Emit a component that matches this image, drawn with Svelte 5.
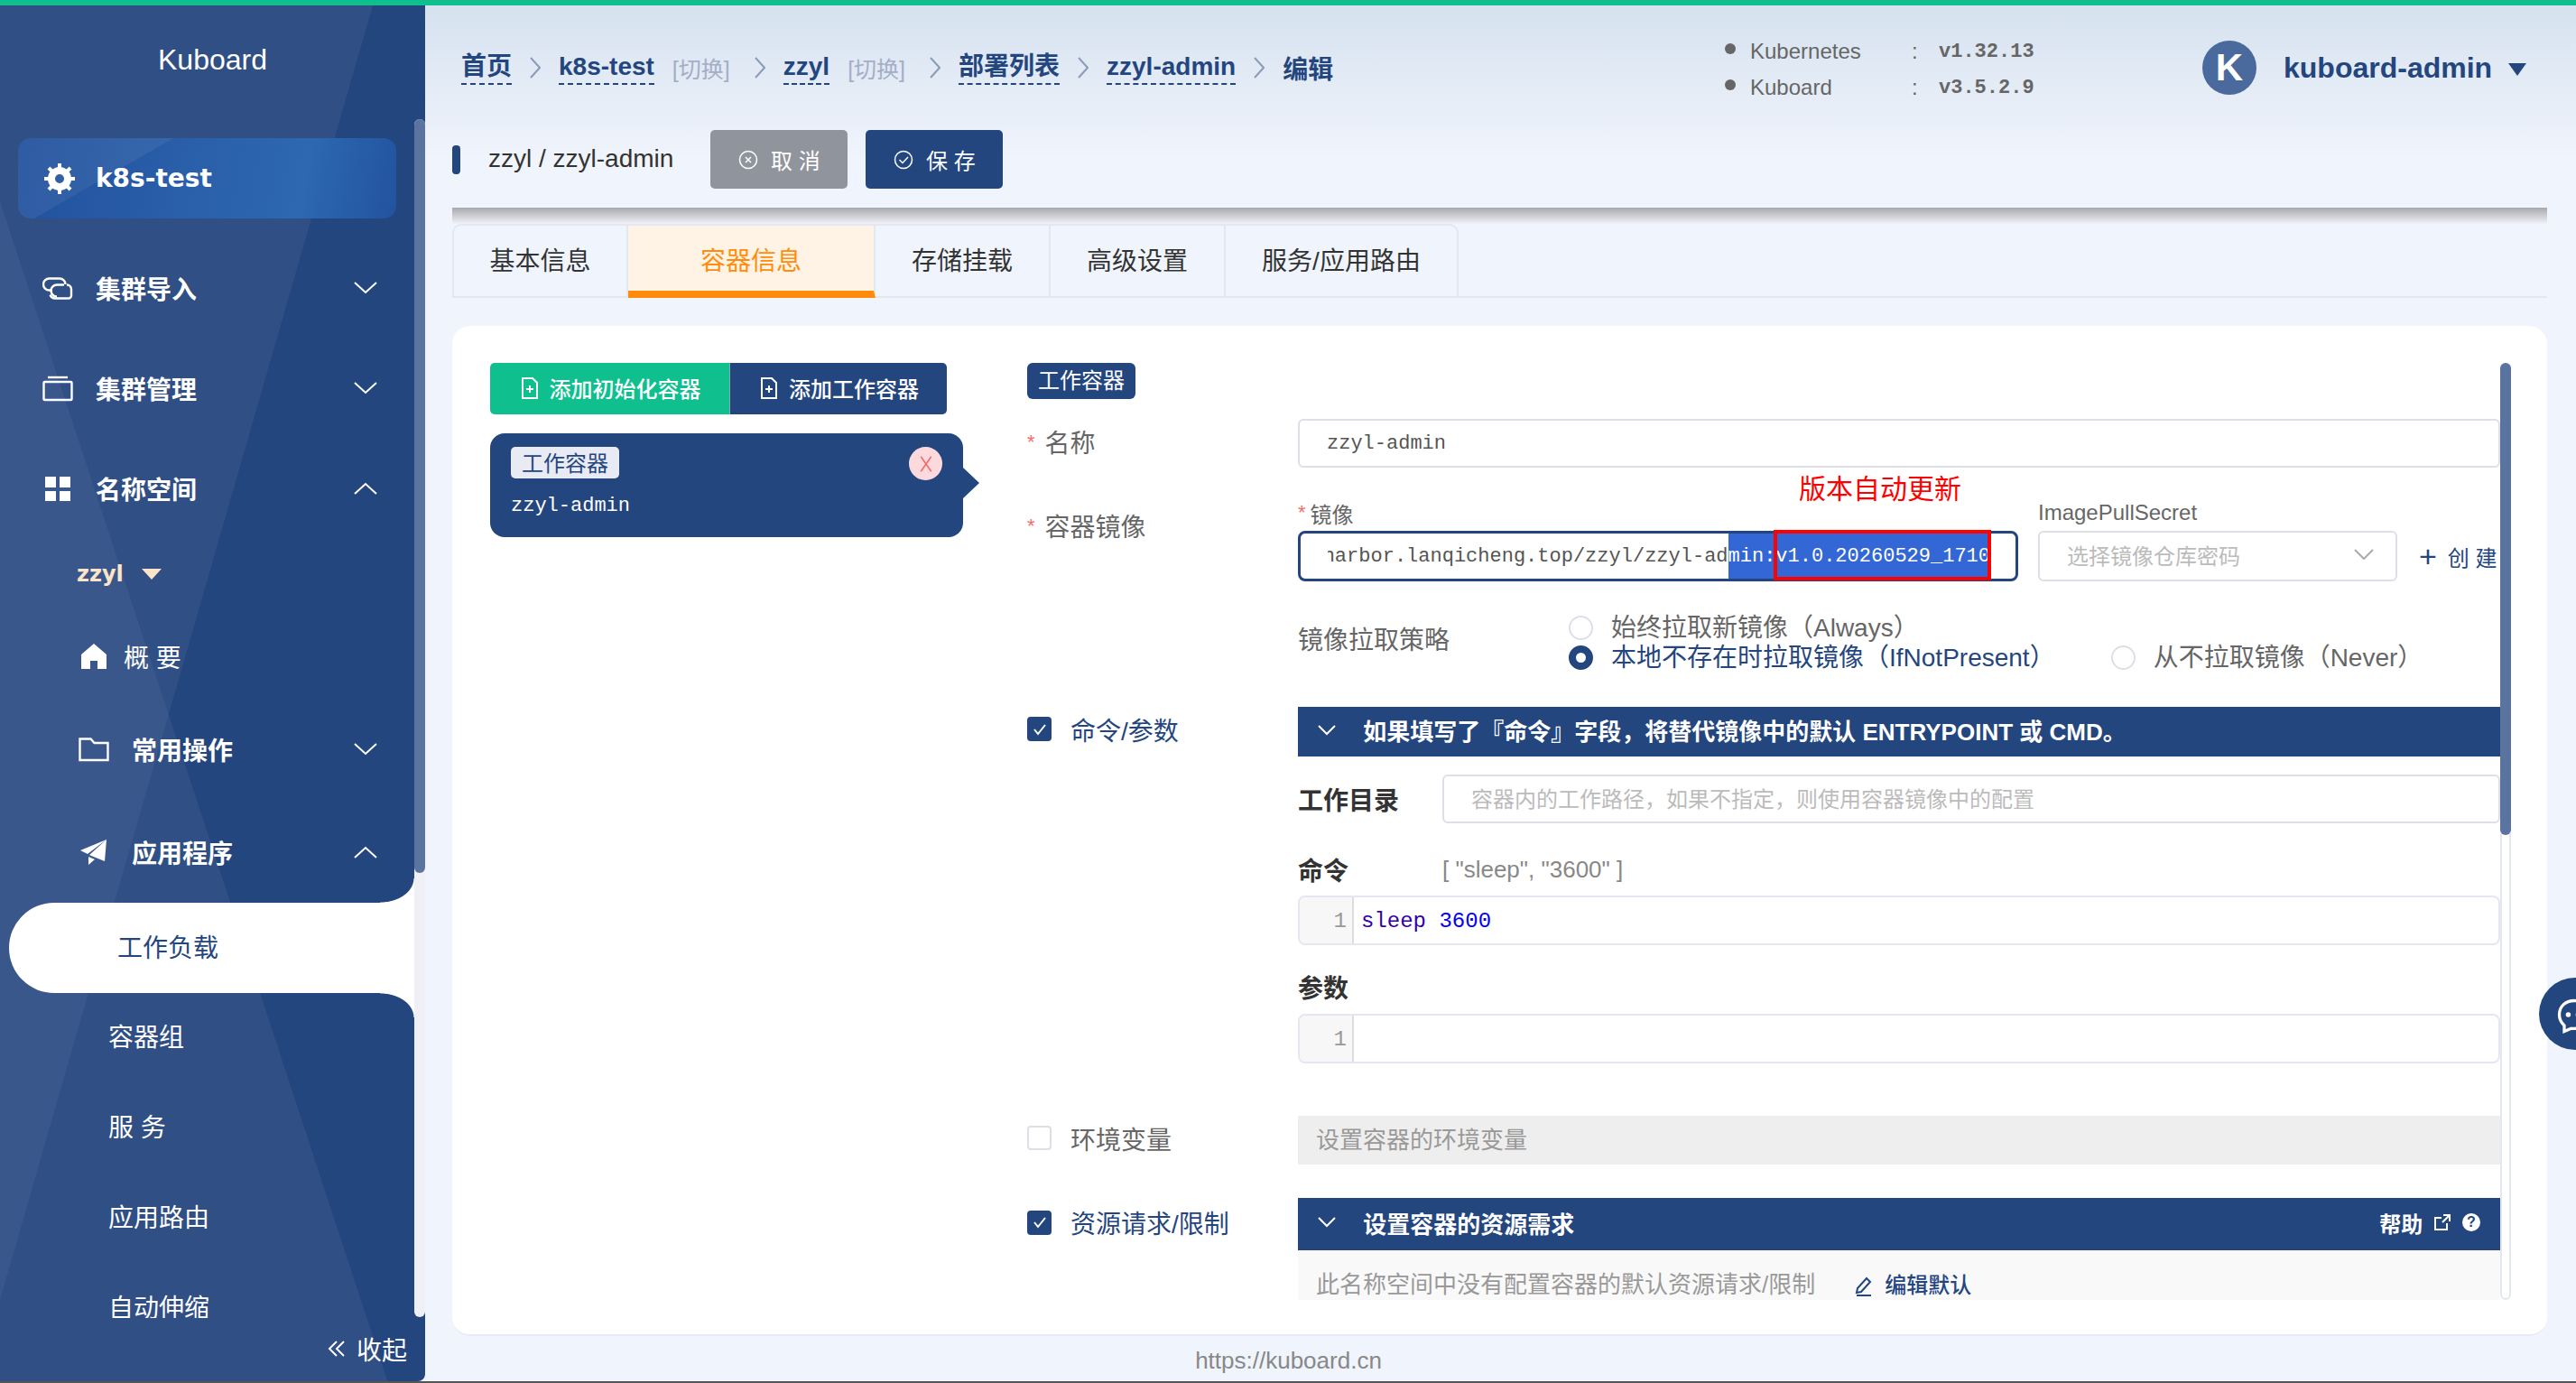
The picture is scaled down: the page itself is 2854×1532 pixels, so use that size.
<script lang="ts">
  const crumbs = [
    { text: '首页' },
    { text: 'k8s-test', swap: true },
    { text: 'zzyl', swap: true },
    { text: '部署列表' },
    { text: 'zzyl-admin' }
  ];
  const tabs = ['基本信息', '容器信息', '存储挂载', '高级设置', '服务/应用路由'];
  const subItems = ['容器组', '服 务', '应用路由', '自动伸缩'];
  const spokes = [0, 45, 90, 135, 180, 225, 270, 315];
</script>

<div class="app">
  <aside class="sidebar">
    <svg class="sidebar-bg" viewBox="0 0 471 1526" aria-hidden="true">
      <polygon points="0,0 413,0 0,1434" fill="#fff" fill-opacity="0.05" />
      <polygon points="0,217 430,1526 0,1526" fill="#fff" fill-opacity="0.05" />
    </svg>
    <div class="logo">Kuboard</div>
    <div class="cluster">
      <svg class="cluster-icon" viewBox="0 0 36 36" aria-hidden="true">
        {#each spokes as a}
          <rect x="16" y="1" width="4" height="8" fill="#fff" transform="rotate({a} 18 18)" />
        {/each}
        <circle cx="18" cy="18" r="9" fill="none" stroke="#fff" stroke-width="8" />
      </svg>
      <span>k8s-test</span>
    </div>

    <nav class="nav">
      <div class="nav-item">
        <svg class="nav-icon" viewBox="0 0 34 34" aria-hidden="true">
          <path d="M11 19.500H7.500a6.500 6.500 0 0 1 0-13H19a6.500 6.500 0 0 1 6.500 6.500" fill="none" stroke="#fff" stroke-width="2.400" />
          <path d="M16 26.500a6.500 6.500 0 0 1 0-13h8" fill="none" stroke="#fff" stroke-width="2.400" />
          <path d="M27 13.500a5 5 0 0 1 5 5v7a3 3 0 0 1-3 3H14a6 6 0 0 1-5.500-4" fill="none" stroke="#fff" stroke-width="2.400" />
        </svg>
        <span class="nav-label">集群导入</span>
        <svg class="chev" viewBox="0 0 26 14" aria-hidden="true"><path d="M1 1l12 11L25 1" /></svg>
      </div>
      <div class="nav-item">
        <svg class="nav-icon" viewBox="0 0 34 34" aria-hidden="true">
          <rect x="1.500" y="10" width="31" height="20" rx="1" fill="none" stroke="#fff" stroke-width="2.400" />
          <path d="M6 5h22" stroke="#fff" stroke-width="2.400" />
        </svg>
        <span class="nav-label">集群管理</span>
        <svg class="chev" viewBox="0 0 26 14" aria-hidden="true"><path d="M1 1l12 11L25 1" /></svg>
      </div>
      <div class="nav-item">
        <svg class="nav-icon" viewBox="0 0 34 34" aria-hidden="true">
          <path d="M3 4h12v12H3zM19 4h12v12H19zM3 20h12v11H3zM19 20h12v11H19z" fill="#fff" />
        </svg>
        <span class="nav-label">名称空间</span>
        <svg class="chev" viewBox="0 0 26 14" aria-hidden="true"><path d="M1 13L13 2l12 11" /></svg>
      </div>
      <div class="ns">
        <span>zzyl</span><i class="ns-caret"></i>
      </div>
      <div class="nav-sub home">
        <svg class="nav-icon" viewBox="0 0 34 34" aria-hidden="true">
          <path d="M17 3L3 15v16h10v-9h8v9h10V15z" fill="#fff" />
        </svg>
        <span>概 要</span>
      </div>
      <div class="nav-sub group first">
        <svg class="nav-icon" viewBox="0 0 34 34" aria-hidden="true">
          <path d="M1.500 5.500h12l4 4.500h15v19h-31z" fill="none" stroke="#fff" stroke-width="2.400" />
        </svg>
        <span class="nav-label">常用操作</span>
        <svg class="chev" viewBox="0 0 26 14" aria-hidden="true"><path d="M1 1l12 11L25 1" /></svg>
      </div>
      <div class="nav-sub group">
        <svg class="nav-icon" viewBox="0 0 34 34" aria-hidden="true">
          <path d="M31 3L2 15l8 4zM31 3L12 20l2 1 15 6zM11 22v9l7-6z" fill="#fff" />
        </svg>
        <span class="nav-label">应用程序</span>
        <svg class="chev" viewBox="0 0 26 14" aria-hidden="true"><path d="M1 13L13 2l12 11" /></svg>
      </div>
      <div class="active-item">工作负载</div>
      {#each subItems as item}
        <div class="sub-link">{item}</div>
      {/each}
    </nav>
    <div class="track"><div class="thumb"></div></div>
    <div class="collapse">
      <svg viewBox="0 0 20 20" aria-hidden="true"><path d="M10 2L2 10l8 8M18 2l-8 8 8 8" /></svg>
      <span>收起</span>
    </div>
  </aside>

  <main class="main">
    <header class="topbar">
      <div class="crumbs">
        {#each crumbs as c}
          <a class="crumb" href="#top">{c.text}</a>
          {#if c.swap}<span class="swap">[切换]</span>{/if}
          <svg class="sep" class:wide={c.swap} viewBox="0 0 12 24" aria-hidden="true"><path d="M1 1l10 11L1 23" /></svg>
        {/each}
        <span class="crumb-last">编辑</span>
      </div>
      <div class="versions">
        <div class="ver"><i></i><span class="ver-name">Kubernetes</span><span class="ver-sep">:</span><b>v1.32.13</b></div>
        <div class="ver"><i></i><span class="ver-name">Kuboard</span><span class="ver-sep">:</span><b>v3.5.2.9</b></div>
      </div>
      <div class="user">
        <span class="avatar">K</span>
        <span class="user-name">kuboard-admin</span>
        <i class="user-caret"></i>
      </div>
    </header>

    <div class="title-row">
      <i class="title-bar"></i>
      <span class="title">zzyl / zzyl-admin</span>
      <button class="btn btn-gray">
        <svg viewBox="0 0 22 22" aria-hidden="true"><circle cx="11" cy="11" r="9.500" /><path d="M8 8l6 6M14 8l-6 6" /></svg>
        取 消
      </button>
      <button class="btn btn-navy">
        <svg viewBox="0 0 22 22" aria-hidden="true"><circle cx="11" cy="11" r="9.500" /><path d="M6.500 11l3.500 3.500 6-6.500" /></svg>
        保 存
      </button>
    </div>
    <div class="shade"></div>

    <div class="tabs">
      {#each tabs as t, i}
        <div class="tab" class:on={i === 1}>{t}</div>
      {/each}
    </div>

    <section class="card">
      <div class="left">
        <div class="add-group">
          <button class="add green">
            <svg viewBox="0 0 20 26" aria-hidden="true"><path d="M2 2h11l5 5v17H2zM6 14h8M10 10v8" /></svg>
            添加初始化容器
          </button>
          <button class="add navy">
            <svg viewBox="0 0 20 26" aria-hidden="true"><path d="M2 2h11l5 5v17H2zM6 14h8M10 10v8" /></svg>
            添加工作容器
          </button>
        </div>
        <div class="container-item">
          <span class="item-badge">工作容器</span>
          <div class="item-name">zzyl-admin</div>
          <span class="remove">
            <svg viewBox="0 0 16 22" aria-hidden="true"><path d="M1 1l14 20M15 1L1 21" /></svg>
          </span>
        </div>
      </div>

      <div class="form">
        <span class="form-badge">工作容器</span>

        <div class="row name-row">
          <div class="lbl"><em>*</em>名称</div>
          <div class="input mono">zzyl-admin</div>
        </div>

        <div class="row image-row">
          <div class="lbl"><em>*</em>容器镜像</div>
          <div class="image-fields">
            <div class="image-col">
              <div class="mini"><em>*</em>镜像</div>
              <div class="image-input">
                <div class="image-text mono"><span class="image-value">harbor.lanqicheng.top/zzyl/zzyl-ad<span class="sel">min:v1.0.20260529_1710</span></span></div>
              </div>
            </div>
            <div class="secret-col">
              <div class="mini">ImagePullSecret</div>
              <div class="secret">
                <span>选择镜像仓库密码</span>
                <svg viewBox="0 0 22 12" aria-hidden="true"><path d="M1 1l10 10L21 1" /></svg>
              </div>
            </div>
            <div class="create"><span class="plus">+</span>创 建</div>
            <div class="note">版本自动更新</div>
            <div class="note-box"></div>
          </div>
        </div>

        <div class="row policy-row">
          <div class="policy">
            <div class="policy-label">镜像拉取策略</div>
            <div class="policy-opts">
              <div class="radio-line"><span class="radio"><i class="dot off"></i>始终拉取新镜像（Always）</span></div>
              <div class="radio-line">
                <span class="radio checked"><i class="dot"></i>本地不存在时拉取镜像（IfNotPresent）</span>
                <span class="radio third"><i class="dot off"></i>从不拉取镜像（Never）</span>
              </div>
            </div>
          </div>
        </div>

        <div class="row section-row cmd">
          <div class="check-label on"><i class="check"><svg viewBox="0 0 18 18" aria-hidden="true"><path d="M3 9l4 5 8-10" /></svg></i>命令/参数</div>
          <div class="section-bar">
            <svg class="bar-chev" viewBox="0 0 20 12" aria-hidden="true"><path d="M1 1l9 9 9-9" /></svg>
            如果填写了『命令』字段，将替代镜像中的默认 ENTRYPOINT 或 CMD。
          </div>
        </div>
        <div class="sub-block">
          <div class="workdir">
            <b>工作目录</b>
            <div class="input placeholder">容器内的工作路径，如果不指定，则使用容器镜像中的配置</div>
          </div>
          <div class="cmd-head"><b>命令</b><span>[ "sleep", "3600" ]</span></div>
          <div class="editor"><span class="gutter">1</span><span class="code mono"><span class="kw">sleep</span> <span class="num">3600</span></span></div>
          <div class="cmd-head args"><b>参数</b></div>
          <div class="editor second"><span class="gutter">1</span><span class="code"></span></div>
        </div>

        <div class="row section-row env">
          <div class="check-label"><i class="check blank"></i>环境变量</div>
          <div class="env-bar">设置容器的环境变量</div>
        </div>

        <div class="row section-row res">
          <div class="check-label on"><i class="check"><svg viewBox="0 0 18 18" aria-hidden="true"><path d="M3 9l4 5 8-10" /></svg></i>资源请求/限制</div>
          <div class="section-bar tall">
            <svg class="bar-chev" viewBox="0 0 20 12" aria-hidden="true"><path d="M1 1l9 9 9-9" /></svg>
            设置容器的资源需求
            <span class="help">
              帮助
              <svg class="ext" viewBox="0 0 20 20" aria-hidden="true"><path d="M15 11v7H2V5h7M11 2h7v7M18 2l-8 8" /></svg>
              <i class="q">?</i>
            </span>
          </div>
        </div>
        <div class="res-body">
          <span>此名称空间中没有配置容器的默认资源请求/限制</span>
          <a class="edit" href="#top">
            <svg viewBox="0 0 20 22" aria-hidden="true"><path d="M13 2l4 4L7 17l-5 1 1-5zM2 21h16" /></svg>
            编辑默认
          </a>
        </div>

        <div class="form-track"><div class="form-thumb"></div></div>
      </div>
    </section>
    <footer class="foot">https://kuboard.cn</footer>
  </main>

  <div class="chat">
    <svg viewBox="0 0 40 40" aria-hidden="true">
      <path d="M20 5C11 5 5 11 5 19c0 5 2 8 5 11v6l7-3c10 1 18-5 18-14S29 5 20 5z" fill="none" stroke="#fff" stroke-width="3" />
      <circle cx="14" cy="19" r="2.500" fill="#fff" /><circle cx="24" cy="19" r="2.500" fill="#fff" />
    </svg>
  </div>
</div>

<style>
  :global(body) {
    margin: 0;
    font-family: "Liberation Sans", "Noto Sans CJK SC", sans-serif;
  }
  .app {
    position: relative;
    display: flex;
    width: 2854px;
    height: 1532px;
    box-sizing: border-box;
    border-top: 6px solid #0fbf8e;
    border-bottom: 2px solid #555;
    overflow: hidden;
    background: #f0f4fc;
    font-size: 28px;
  }
  .mono { font-family: "Liberation Mono", monospace; }

  /* sidebar */
  .sidebar {
    position: relative;
    display: flex;
    flex-direction: column;
    flex: 0 0 471px;
    background: #24467f;
    color: #fff;
    border-radius: 0 0 8px 0;
  }
  .sidebar-bg {
    position: absolute;
    inset: 0;
    width: 471px;
    height: 1526px;
  }
  .logo {
    position: relative;
    height: 147px;
    padding-top: 40px;
    box-sizing: border-box;
    line-height: 40px;
    text-align: center;
    font-size: 32px;
  }
  .cluster {
    position: relative;
    display: flex;
    align-items: center;
    margin-left: 20px;
    width: 419px;
    height: 89px;
    border-radius: 14px;
    background:
      linear-gradient(150deg, rgba(255, 255, 255, 0.06) 0 30%, transparent 30% 100%),
      linear-gradient(100deg, #22519d 0%, #2a5fa9 45%, #2d68b1 75%, #22539f 100%);
    font-size: 28px;
    font-weight: 700;
    font-family: "DejaVu Sans", sans-serif;
  }
  .cluster-icon { width: 36px; height: 36px; margin: 0 22px 0 28px; }
  .nav {
    position: relative;
    flex: 0 0 1218px;
    width: 459px;
    padding-top: 21px;
    box-sizing: border-box;
    overflow: hidden;
  }
  .nav-item, .group {
    display: flex;
    align-items: center;
    height: 111px;
    padding-right: 41px;
    font-weight: 700;
  }
  .nav-item { padding-left: 47px; }
  .nav-icon { width: 34px; height: 34px; flex: none; }
  .nav-label { flex: 1; margin-left: 25px; }
  .chev {
    width: 26px;
    height: 14px;
    fill: none;
    stroke: #fff;
    stroke-width: 2;
  }
  .ns {
    display: flex;
    align-items: center;
    height: 56px;
    margin-top: 12px;
    padding-left: 85px;
    color: #fde3c8;
    font-size: 24px;
    font-weight: 700;
    font-family: "DejaVu Sans", sans-serif;
  }
  .ns-caret {
    margin-left: 20px;
    border: 11px solid transparent;
    border-top: 12px solid #fde3c8;
    border-bottom: 0;
  }
  .nav-sub {
    display: flex;
    align-items: center;
    padding-left: 87px;
  }
  .home { height: 92px; margin-top: 17px; }
  .home span { margin-left: 16px; }
  .group { height: 113px; padding-left: 87px; }
  .group.first { height: 114px; }
  .group .nav-label { margin-left: 25px; }
  .active-item {
    position: relative;
    height: 100px;
    margin-left: 10px;
    padding-left: 120px;
    line-height: 102px;
    background: #fff;
    color: #24467f;
    border-radius: 50px 0 0 50px / 50px 0 0 50px;
  }
  .active-item::before, .active-item::after {
    content: "";
    position: absolute;
    right: 0;
    width: 38px;
    height: 27px;
  }
  .active-item::before {
    top: -27px;
    background: radial-gradient(ellipse 38px 27px at 0 0, transparent 97%, #fff 100%);
  }
  .active-item::after {
    bottom: -27px;
    background: radial-gradient(ellipse 38px 27px at 0 100%, transparent 97%, #fff 100%);
  }
  .sub-link {
    height: 100px;
    padding-left: 120px;
    line-height: 100px;
  }
  .track {
    position: absolute;
    left: 459px;
    top: 126px;
    width: 12px;
    height: 1327px;
    border-radius: 6px;
    background: #eef0f6;
  }
  .thumb {
    height: 835px;
    border-radius: 6px;
    background: #5a749f;
  }
  .collapse {
    position: relative;
    flex: 1;
    display: flex;
    align-items: center;
    justify-content: flex-end;
    gap: 12px;
    padding: 0 20px 2px 0;
    font-size: 28px;
  }
  .collapse svg {
    width: 20px;
    height: 20px;
    fill: none;
    stroke: #fff;
    stroke-width: 2;
  }

  /* main */
  .main {
    flex: 1;
    min-width: 0;
    display: flex;
    flex-direction: column;
    padding: 0 32px 0 30px;
    background: linear-gradient(#d6e2ef, #f0f4fc 170px);
  }
  .topbar {
    position: relative;
    display: flex;
    align-items: center;
    height: 138px;
    flex: none;
  }
  .crumbs {
    display: flex;
    align-items: center;
    margin-left: 10px;
    flex: 1;
    font-weight: 700;
    color: #24467f;
  }
  .crumb {
    color: #24467f;
    text-decoration: none;
    border-bottom: 2px dashed #24467f;
    line-height: 36px;
  }
  .swap {
    margin-left: 20px;
    color: #a3afc6;
    font-size: 25px;
    font-weight: 400;
  }
  .sep {
    width: 12px;
    height: 24px;
    margin: 0 20px;
    fill: none;
    stroke: #8a9cb8;
    stroke-width: 2;
  }
  .sep.wide { margin-left: 27px; }
  .crumb-last { color: #24467f; }
  .versions {
    width: 396px;
    margin-right: 133px;
    color: #666;
    font-size: 24px;
    margin-top: 4px;
  }
  .ver {
    display: flex;
    align-items: center;
    height: 40px;
  }
  .ver i {
    width: 12px;
    height: 12px;
    border-radius: 50%;
    background: #666;
    margin-right: 16px;
    margin-top: -6px;
  }
  .ver-name { width: 179px; }
  .ver-sep { width: 30px; }
  .ver b {
    font-family: "Liberation Mono", monospace;
    font-size: 22px;
  }
  .user {
    display: flex;
    align-items: center;
    width: 350px;
    color: #24467f;
    font-size: 32px;
    font-weight: 700;
    margin-right: 32px;
    white-space: nowrap;
  }
  .avatar {
    flex: none;
    width: 60px;
    height: 60px;
    border-radius: 50%;
    background: #4a6a9e;
    color: #fff;
    font-size: 42px;
    font-weight: 700;
    line-height: 60px;
    text-align: center;
    margin-right: 30px;
  }
  .user-caret {
    margin-left: 18px;
    border: 10px solid transparent;
    border-top: 14px solid #24467f;
    border-bottom: 0;
    margin-top: 4px;
  }
  .title-row {
    display: flex;
    align-items: center;
    height: 65px;
    flex: none;
  }
  .title-bar {
    width: 9px;
    height: 32px;
    border-radius: 4px;
    background: #24467f;
  }
  .title { margin: -2px 41px 0 31px; color: #333; }
  .btn {
    display: inline-flex;
    align-items: center;
    justify-content: center;
    gap: 14px;
    width: 152px;
    height: 65px;
    border: 0;
    border-radius: 5px;
    color: #fff;
    font: inherit;
    font-size: 24px;
    margin-right: 20px;
  }
  .btn svg {
    width: 22px;
    height: 22px;
    fill: none;
    stroke: #fff;
    stroke-width: 1.500;
  }
  .btn-gray { background: #90949c; }
  .btn-navy { background: #24467f; }
  .shade {
    flex: none;
    margin-top: 21px;
    height: 18px;
    background: linear-gradient(#a8a9ad, #f0f2f8);
  }
  .tabs {
    flex: none;
    display: flex;
    height: 82px;
    box-sizing: border-box;
    border-bottom: 2px solid #e4e7ef;
    color: #333;
  }
  .tab {
    box-sizing: border-box;
    height: 82px;
    padding: 0 40px;
    line-height: 80px;
    border: 2px solid #e4e7ef;
    border-left-width: 0;
    border-bottom: 0;
    text-align: center;
  }
  .tab:first-child {
    border-left-width: 2px;
    border-top-left-radius: 10px;
    width: 195px;
    padding: 0;
  }
  .tab:nth-child(3), .tab:nth-child(4) { width: 194px; padding: 0; }
  .tab:last-child { width: 258px; padding: 0; border-top-right-radius: 10px; }
  .tab.on {
    width: 274px;
    padding: 0;
    background: #fff3e6;
    color: #ff8c0a;
    border-bottom: 8px solid #ff8c0a;
  }
  .card {
    flex: none;
    display: flex;
    height: 1119px;
    margin-top: 31px;
    box-sizing: border-box;
    padding: 41px 0 0 42px;
    background: #fff;
    border-radius: 20px;
    border-bottom: 2px solid #e8ebf3;
  }
  .left { width: 524px; flex: none; }
  .add-group { display: flex; width: 506px; }
  .add {
    display: inline-flex;
    align-items: center;
    justify-content: center;
    gap: 12px;
    height: 57px;
    padding: 0 0 2px 2px;
    border: 0;
    color: #fff;
    font: inherit;
    font-size: 24px;
    font-weight: 500;
  }
  .add svg {
    width: 20px;
    height: 26px;
    fill: none;
    stroke: #fff;
    stroke-width: 2;
  }
  .green { width: 265px; background: #0fbf8e; border-radius: 5px 0 0 5px; }
  .navy { width: 241px; background: #24467f; border-radius: 0 5px 5px 0; border-left: 1px solid #8aa; }
  .container-item {
    position: relative;
    height: 115px;
    margin-top: 21px;
    padding: 15px 0 0 23px;
    box-sizing: border-box;
    background: #24467f;
    border-radius: 16px;
    color: #fff;
  }
  .container-item::after {
    content: "";
    position: absolute;
    left: 100%;
    top: 38px;
    border: 17px solid transparent;
    border-left: 18px solid #24467f;
    border-right: 0;
  }
  .item-badge {
    display: inline-block;
    height: 35px;
    padding: 0 12px;
    border-radius: 5px;
    background: #e8ebf3;
    color: #24467f;
    font-size: 24px;
    line-height: 37px;
  }
  .item-name {
    margin-top: 17px;
    font-family: "Liberation Mono", monospace;
    font-size: 22px;
    line-height: 28px;
  }
  .remove {
    position: absolute;
    right: 23px;
    top: 15px;
    display: flex;
    align-items: center;
    justify-content: center;
    width: 37px;
    height: 37px;
    border-radius: 50%;
    background: #fcd9dc;
  }
  .remove svg {
    width: 16px;
    height: 18px;
    fill: none;
    stroke: #f56c6c;
    stroke-width: 2;
  }
  .form {
    position: relative;
    width: 1644px;
    height: 1038px;
    margin-left: 71px;
    flex: none;
    overflow: hidden;
  }
  .form-badge {
    display: block;
    width: 120px;
    height: 40px;
    border-radius: 6px;
    background: #24467f;
    color: #fff;
    font-size: 24px;
    line-height: 40px;
    text-align: center;
  }
  .row {
    display: grid;
    grid-template-columns: 300px 1332px;
  }
  .lbl {
    color: #666;
    font-size: 28px;
    line-height: 52px;
  }
  .lbl em, .mini em {
    color: #f56c6c;
    font-style: normal;
    font-size: 22px;
    margin-right: 11px;
    vertical-align: 4px;
  }
  .mini em { margin-right: 5px; }
  .name-row { margin-top: 22px; }
  .input {
    box-sizing: border-box;
    height: 54px;
    padding-left: 30px;
    border: 2px solid #dcdfe6;
    border-radius: 6px;
    color: #555;
    font-size: 22px;
    line-height: 52px;
  }
  .image-row { margin-top: 34px; }
  .image-row .lbl { margin-top: 5px; }
  .image-fields {
    position: relative;
    display: flex;
  }
  .mini {
    height: 36px;
    margin-top: -2px;
    margin-bottom: 2px;
    color: #666;
    font-size: 24px;
    line-height: 36px;
  }
  .image-col { width: 798px; }
  .image-input {
    box-sizing: border-box;
    height: 56px;
    padding: 0 28px 0 30px;
    border: 3px solid #24467f;
    border-radius: 8px;
    overflow: hidden;
  }
  .image-text {
    display: flex;
    justify-content: flex-end;
    height: 50px;
    overflow: hidden;
    white-space: nowrap;
    color: #555;
    font-size: 22px;
    line-height: 52px;
  }
  .image-value { flex: none; }
  .sel { background: #3367d6; color: #fff; display: inline-block; height: 50px; }
  .secret-col { width: 398px; margin-left: 22px; }
  .secret {
    box-sizing: border-box;
    display: flex;
    align-items: center;
    justify-content: space-between;
    height: 56px;
    padding: 0 24px 4px 30px;
    border: 2px solid #dcdfe6;
    border-radius: 6px;
    color: #bbb;
    font-size: 24px;
  }
  .secret svg {
    width: 22px;
    height: 12px;
    fill: none;
    stroke: #aaa;
    stroke-width: 2;
  }
  .create {
    display: flex;
    align-items: center;
    gap: 12px;
    height: 56px;
    margin: 36px 0 0 24px;
    color: #24467f;
    font-size: 24px;
    white-space: nowrap;
  }
  .plus { font-size: 34px; line-height: 34px; }
  .note {
    position: absolute;
    left: 555px;
    top: -30px;
    color: #f00;
    font-size: 30px;
    line-height: 40px;
  }
  .note-box {
    position: absolute;
    left: 527px;
    top: 35px;
    width: 241px;
    height: 56px;
    box-sizing: border-box;
    border: 4px solid #f00;
  }
  .policy-row { margin-top: 34px; }
  .policy {
    grid-column: 2;
    display: flex;
    color: #666;
    height: 64px;
  }
  .policy-label {
    width: 288px;
    padding-top: 14px;
    line-height: 36px;
  }
  .policy-opts { margin-top: 1px; }
  .radio-line { display: flex; height: 33px; line-height: 33px; white-space: nowrap; }
  .radio { display: inline-flex; align-items: center; margin-left: 12px; }
  .radio.checked { color: #24467f; }
  .dot {
    box-sizing: border-box;
    width: 27px;
    height: 27px;
    border-radius: 50%;
    border: 8px solid #24467f;
    background: #fff;
    margin-right: 20px;
    flex: none;
  }
  .dot.off { border: 2px solid #dcdfe6; }
  .third { margin-left: 62px; }
  .cmd { margin-top: 41px; }
  .check-label {
    display: flex;
    align-items: center;
    color: #666;
    height: 55px;
    margin-top: -3px;
  }
  .check-label.on { color: #24467f; }
  .check {
    box-sizing: border-box;
    display: flex;
    align-items: center;
    justify-content: center;
    width: 27px;
    height: 27px;
    margin-right: 21px;
    border-radius: 4px;
    background: #24467f;
  }
  .check svg {
    width: 18px;
    height: 18px;
    fill: none;
    stroke: #fff;
    stroke-width: 2;
  }
  .check.blank { background: #fff; border: 2px solid #dcdfe6; }
  .section-bar {
    position: relative;
    display: flex;
    align-items: center;
    height: 55px;
    box-sizing: border-box;
    padding: 0 0 4px 22px;
    background: #24467f;
    color: #fff;
    font-size: 26px;
    font-weight: 700;
    white-space: pre;
  }
  .section-bar.tall { height: 58px; }
  .bar-chev {
    width: 20px;
    height: 12px;
    margin-right: 23px;
    fill: none;
    stroke: #fff;
    stroke-width: 2;
  }
  .sub-block { width: 1332px; margin-left: 300px; }
  .workdir {
    display: flex;
    align-items: center;
    margin-top: 20px;
  }
  .workdir b { width: 160px; color: #333; }
  .workdir .input { flex: 1; }
  .placeholder {
    color: #bbb;
    font-size: 24px;
  }
  .cmd-head {
    display: flex;
    align-items: center;
    height: 36px;
    margin-top: 33px;
    color: #333;
  }
  .cmd-head b { width: 160px; }
  .cmd-head span { color: #888; font-size: 26px; }
  .cmd-head.args { margin-top: 28px; }
  .editor {
    box-sizing: border-box;
    display: flex;
    height: 55px;
    margin-top: 11px;
    border: 2px solid #e4e7ef;
    border-radius: 8px;
    overflow: hidden;
  }
  .editor.second { margin-top: 12px; }
  .gutter {
    box-sizing: border-box;
    width: 60px;
    padding-right: 6px;
    border-right: 2px solid #ddd;
    background: #f7f7f7;
    color: #999;
    font-family: "Liberation Mono", monospace;
    font-size: 24px;
    line-height: 53px;
    text-align: right;
  }
  .code {
    padding-left: 8px;
    font-size: 24px;
    line-height: 53px;
  }
  .kw { color: #30a; }
  .num { color: #00f; }
  .env { margin-top: 58px; }
  .env-bar {
    height: 54px;
    padding-left: 20px;
    background: #eee;
    color: #999;
    font-size: 26px;
    line-height: 54px;
  }
  .res { margin-top: 37px; }
  .res .check-label { height: 58px; margin-top: -2px; }
  .help {
    position: absolute;
    right: 22px;
    top: 0;
    display: flex;
    align-items: center;
    height: 54px;
    font-size: 24px;
  }
  .ext {
    width: 20px;
    height: 20px;
    margin: 0 12px 0 5px;
    fill: none;
    stroke: #fff;
    stroke-width: 2;
  }
  .q {
    width: 20px;
    height: 20px;
    border-radius: 50%;
    background: #fff;
    color: #24467f;
    font-size: 16px;
    font-style: normal;
    font-weight: 700;
    line-height: 20px;
    text-align: center;
  }
  .res-body {
    width: 1312px;
    height: 100px;
    margin-left: 300px;
    padding: 20px 0 0 20px;
    background: #f9f9f9;
    color: #999;
    font-size: 26px;
    line-height: 36px;
  }
  .edit {
    margin-left: 37px;
    color: #24467f;
    font-size: 24px;
    font-weight: 500;
    text-decoration: none;
  }
  .edit svg {
    width: 20px;
    height: 22px;
    margin-right: 6px;
    vertical-align: -4px;
    fill: none;
    stroke: #24467f;
    stroke-width: 2;
  }
  .form-track {
    position: absolute;
    left: 1632px;
    top: 0;
    width: 12px;
    height: 1038px;
    box-sizing: border-box;
    border: 2px solid #e4e7ef;
    border-radius: 6px;
  }
  .form-thumb {
    margin: -2px;
    height: 523px;
    border-radius: 6px;
    background: #5a749f;
  }
  .foot {
    height: 44px;
    padding-right: 468px;
    color: #888;
    font-size: 26px;
    line-height: 54px;
    text-align: center;
  }
  .chat {
    position: absolute;
    left: 2813px;
    top: 1077px;
    width: 84px;
    height: 80px;
    border-radius: 40px;
    background: #24467f;
  }
  .chat svg {
    width: 44px;
    height: 44px;
    margin: 20px 0 0 17px;
  }
</style>
